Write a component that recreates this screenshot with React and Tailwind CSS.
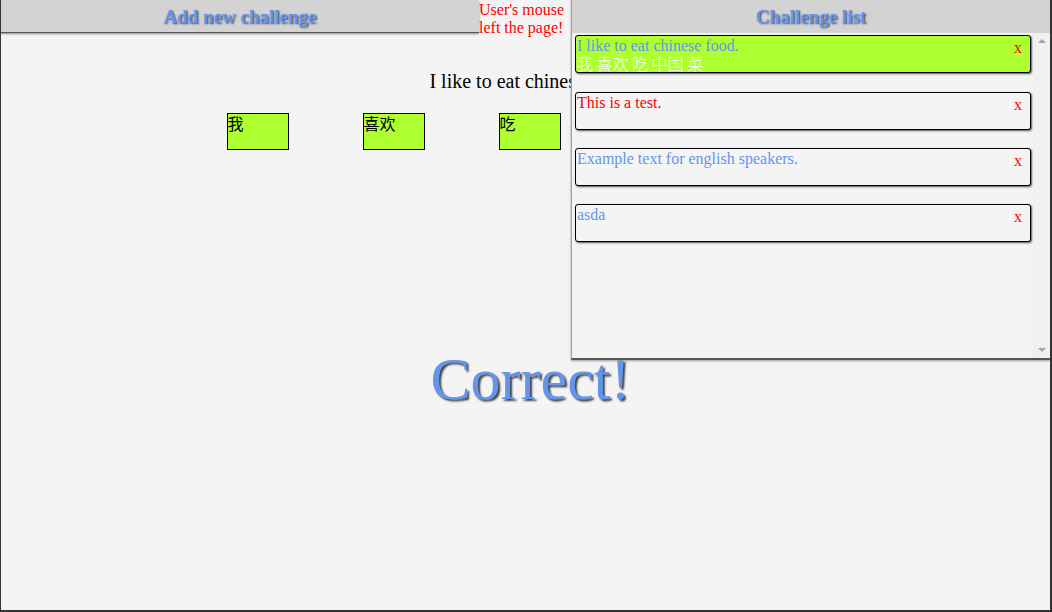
import React from 'react';

const serif = "font-['Liberation_Serif','Noto_Sans_CJK_SC',serif]";

const words = ['我', '喜欢', '吃', '中国', '菜'];

const challenges = [
  { id: 1, text: 'I like to eat chinese food.', sub: '我 喜欢 吃 中国 菜', active: true, color: 'text-[#6495ed]' },
  { id: 2, text: 'This is a test.', color: 'text-[#ff0000]' },
  { id: 3, text: 'Example text for english speakers.', color: 'text-[#6495ed]' },
  { id: 4, text: 'asda', color: 'text-[#6495ed]' },
];

function ChallengeItem({ item }) {
  return (
    <div className={`h-[38px] flex justify-between border border-black rounded-[3px] shadow-[1px_1px_2px_#555] ${item.active ? 'bg-[#adff2f] mb-[19px]' : 'bg-[#f4f4f4] mb-[18px]'}`}>
      <div className="pl-[1px] pt-[1px]">
        <p className={`text-[16px] leading-[17px] ${item.color}`}>{item.text}</p>
        {item.sub && <p className="text-[16px] leading-[18px] text-white font-['Noto_Sans_CJK_SC',sans-serif] font-light">{item.sub}</p>}
      </div>
      <span className="text-[#ff0000] text-[16px] leading-[18px] pt-[3px] pr-[8px]">x</span>
    </div>
  );
}

export default function App() {
  return (
    <div className={`relative w-[1052px] h-[612px] bg-[#f4f4f4] border-l border-r-2 border-b-2 border-[#333] overflow-hidden ${serif}`}>
      {/* top row */}
      <div className="flex">
        <div className="w-[478px] h-[33px] pt-[2px] bg-[#d3d3d3] border-b-[1.5px] border-[#555] shadow-[0_1px_2px_#888] flex items-center justify-center">
          <h1 className="text-[19px] font-bold text-[#6495ed] [text-shadow:1px_1px_2px_#444]">Add new challenge</h1>
        </div>
        <p className="w-[92px] text-[16px] leading-[18px] text-[#ff0000] pt-[1px]">User's mouse left the page!</p>
      </div>

      {/* main */}
      <div className="flex flex-col items-center">
        <p className="mt-[33px] pl-[10px] text-[20px] leading-[23px] text-black">I like to eat chinese food.</p>
        <div className="flex gap-[74px] mt-[20px] pl-[8px]">
          {words.map(w => (
            <div key={w} className="w-[62px] h-[37px] bg-[#adff2f] border border-black text-black text-[16px] leading-[18px] font-['Noto_Sans_CJK_SC',sans-serif]">
              {w}
            </div>
          ))}
        </div>
        <h2 className="mt-[195px] pl-[10px] text-[60px] leading-[68px] text-[#6495ed] [text-shadow:2px_2px_2px_#444]">Correct!</h2>
      </div>

      {/* challenge list, lies over the page */}
      <div className="absolute left-[570px] top-0 w-[479px] h-[360px] bg-[#f4f4f4] border-l border-[#a0a0a0] border-b-2 border-b-[#555] shadow-[0_1px_2px_#999] flex flex-col">
        <div className="h-[33px] pt-[2px] bg-[#d3d3d3] flex items-center justify-center">
          <h2 className="text-[19px] font-bold text-[#6495ed] [text-shadow:1px_1px_2px_#444]">Challenge list</h2>
        </div>
        <div className="flex flex-1 min-h-0">
          <div className="flex-1 pl-[3px] pr-[2px] pt-[2px] overflow-hidden">
            {challenges.map(c => <ChallengeItem key={c.id} item={c} />)}
          </div>
          <div className="w-[17px] bg-[#f0f0f0] flex flex-col justify-between items-center py-[6px]">
            <div className="w-0 h-0 border-l-[4px] border-r-[4px] border-b-[4px] border-l-transparent border-r-transparent border-b-[#a3a3a3]" />
            <div className="w-0 h-0 border-l-[4px] border-r-[4px] border-t-[4px] border-l-transparent border-r-transparent border-t-[#a3a3a3]" />
          </div>
        </div>
      </div>
    </div>
  );
}
